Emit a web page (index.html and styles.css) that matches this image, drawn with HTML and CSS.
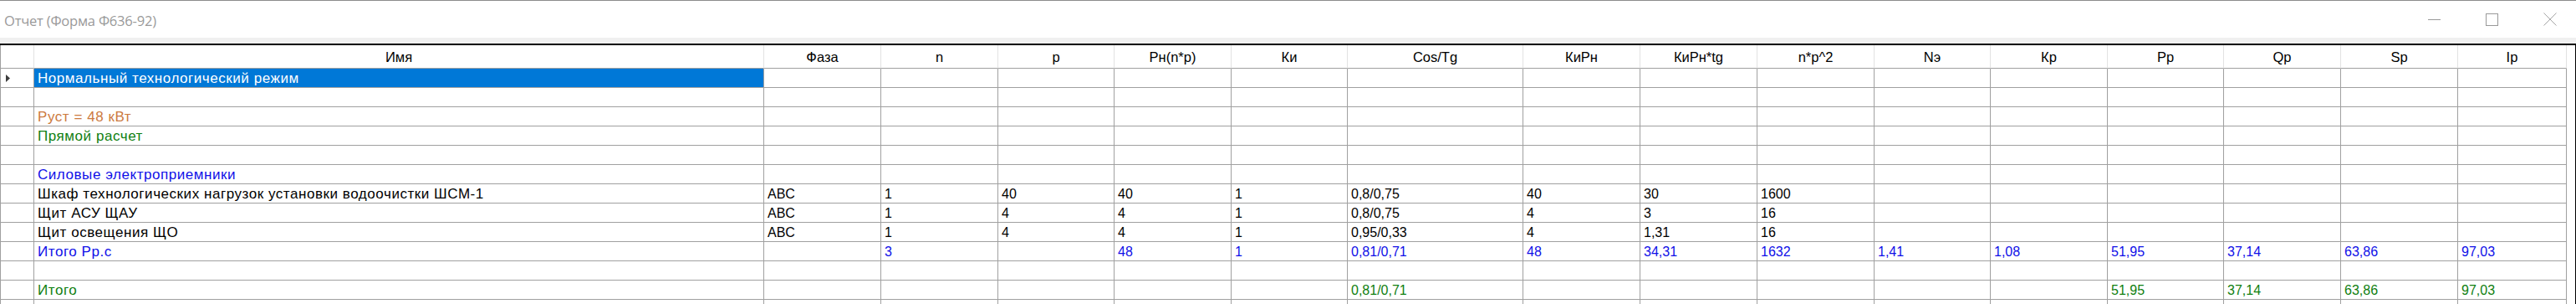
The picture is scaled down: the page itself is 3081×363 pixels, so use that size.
FILE: index.html
```html
<!DOCTYPE html>
<html lang="ru">
<head>
<meta charset="utf-8">
<title>Отчет (Форма Ф636-92)</title>
<link rel="stylesheet" href="styles.css">
</head>
<body>
<div class="titlebar">
  <span class="title">Отчет (Форма Ф636-92)</span>
  <div class="controls">
    <span class="ctl"><svg width="15" height="15" viewBox="0 0 15 15"><line x1="0" y1="7.5" x2="15" y2="7.5" stroke="#999" stroke-width="1"/></svg></span>
    <span class="ctl"><svg width="15" height="15" viewBox="0 0 15 15"><rect x="0.5" y="0.5" width="14" height="14" fill="none" stroke="#999" stroke-width="1"/></svg></span>
    <span class="ctl"><svg width="16" height="16" viewBox="0 0 16 16"><path d="M0.5 0.5 L15.5 15.5 M15.5 0.5 L0.5 15.5" stroke="#a6a6a6" stroke-width="1" fill="none"/></svg></span>
  </div>
</div>
<div class="band"></div>
<div class="grid">
  <div class="row head">
    <div class="h"></div><div class="h">Имя</div><div class="h">Фаза</div><div class="h">n</div><div class="h">p</div><div class="h">Рн(n*p)</div><div class="h">Ки</div><div class="h">Cos/Tg</div><div class="h">КиРн</div><div class="h">КиРн*tg</div><div class="h">n*p^2</div><div class="h">Nэ</div><div class="h">Кр</div><div class="h">Рр</div><div class="h">Qр</div><div class="h">Sр</div><div class="h">Iр</div>
  </div>
  <div class="row">
    <div class="c rh"><svg class="arrow" width="5" height="9" viewBox="0 0 5 9"><polygon points="0,0 5,4.5 0,9" fill="#3c3c3c"/></svg></div><div class="c t sel">Нормальный технологический режим</div><div class="c"></div><div class="c"></div><div class="c"></div><div class="c"></div><div class="c"></div><div class="c"></div><div class="c"></div><div class="c"></div><div class="c"></div><div class="c"></div><div class="c"></div><div class="c"></div><div class="c"></div><div class="c"></div><div class="c"></div>
  </div>
  <div class="row">
    <div class="c rh"></div><div class="c t"></div><div class="c"></div><div class="c"></div><div class="c"></div><div class="c"></div><div class="c"></div><div class="c"></div><div class="c"></div><div class="c"></div><div class="c"></div><div class="c"></div><div class="c"></div><div class="c"></div><div class="c"></div><div class="c"></div><div class="c"></div>
  </div>
  <div class="row orange">
    <div class="c rh"></div><div class="c t">Руст = 48 кВт</div><div class="c"></div><div class="c"></div><div class="c"></div><div class="c"></div><div class="c"></div><div class="c"></div><div class="c"></div><div class="c"></div><div class="c"></div><div class="c"></div><div class="c"></div><div class="c"></div><div class="c"></div><div class="c"></div><div class="c"></div>
  </div>
  <div class="row green">
    <div class="c rh"></div><div class="c t">Прямой расчет</div><div class="c"></div><div class="c"></div><div class="c"></div><div class="c"></div><div class="c"></div><div class="c"></div><div class="c"></div><div class="c"></div><div class="c"></div><div class="c"></div><div class="c"></div><div class="c"></div><div class="c"></div><div class="c"></div><div class="c"></div>
  </div>
  <div class="row">
    <div class="c rh"></div><div class="c t"></div><div class="c"></div><div class="c"></div><div class="c"></div><div class="c"></div><div class="c"></div><div class="c"></div><div class="c"></div><div class="c"></div><div class="c"></div><div class="c"></div><div class="c"></div><div class="c"></div><div class="c"></div><div class="c"></div><div class="c"></div>
  </div>
  <div class="row blue">
    <div class="c rh"></div><div class="c t">Силовые электроприемники</div><div class="c"></div><div class="c"></div><div class="c"></div><div class="c"></div><div class="c"></div><div class="c"></div><div class="c"></div><div class="c"></div><div class="c"></div><div class="c"></div><div class="c"></div><div class="c"></div><div class="c"></div><div class="c"></div><div class="c"></div>
  </div>
  <div class="row">
    <div class="c rh"></div><div class="c t">Шкаф технологических нагрузок установки водоочистки ШСМ-1</div><div class="c">ABC</div><div class="c">1</div><div class="c">40</div><div class="c">40</div><div class="c">1</div><div class="c">0,8/0,75</div><div class="c">40</div><div class="c">30</div><div class="c">1600</div><div class="c"></div><div class="c"></div><div class="c"></div><div class="c"></div><div class="c"></div><div class="c"></div>
  </div>
  <div class="row">
    <div class="c rh"></div><div class="c t">Щит АСУ ЩАУ</div><div class="c">ABC</div><div class="c">1</div><div class="c">4</div><div class="c">4</div><div class="c">1</div><div class="c">0,8/0,75</div><div class="c">4</div><div class="c">3</div><div class="c">16</div><div class="c"></div><div class="c"></div><div class="c"></div><div class="c"></div><div class="c"></div><div class="c"></div>
  </div>
  <div class="row">
    <div class="c rh"></div><div class="c t">Щит освещения ЩО</div><div class="c">ABC</div><div class="c">1</div><div class="c">4</div><div class="c">4</div><div class="c">1</div><div class="c">0,95/0,33</div><div class="c">4</div><div class="c">1,31</div><div class="c">16</div><div class="c"></div><div class="c"></div><div class="c"></div><div class="c"></div><div class="c"></div><div class="c"></div>
  </div>
  <div class="row blue">
    <div class="c rh"></div><div class="c t">Итого Рр.с</div><div class="c"></div><div class="c">3</div><div class="c"></div><div class="c">48</div><div class="c">1</div><div class="c">0,81/0,71</div><div class="c">48</div><div class="c">34,31</div><div class="c">1632</div><div class="c">1,41</div><div class="c">1,08</div><div class="c">51,95</div><div class="c">37,14</div><div class="c">63,86</div><div class="c">97,03</div>
  </div>
  <div class="row">
    <div class="c rh"></div><div class="c t"></div><div class="c"></div><div class="c"></div><div class="c"></div><div class="c"></div><div class="c"></div><div class="c"></div><div class="c"></div><div class="c"></div><div class="c"></div><div class="c"></div><div class="c"></div><div class="c"></div><div class="c"></div><div class="c"></div><div class="c"></div>
  </div>
  <div class="row green">
    <div class="c rh"></div><div class="c t">Итого</div><div class="c"></div><div class="c"></div><div class="c"></div><div class="c"></div><div class="c"></div><div class="c">0,81/0,71</div><div class="c"></div><div class="c"></div><div class="c"></div><div class="c"></div><div class="c"></div><div class="c">51,95</div><div class="c">37,14</div><div class="c">63,86</div><div class="c">97,03</div>
  </div>
  <div class="row">
    <div class="c rh"></div><div class="c t"></div><div class="c"></div><div class="c"></div><div class="c"></div><div class="c"></div><div class="c"></div><div class="c"></div><div class="c"></div><div class="c"></div><div class="c"></div><div class="c"></div><div class="c"></div><div class="c"></div><div class="c"></div><div class="c"></div><div class="c"></div>
  </div>
</div>
</body>
</html>
```

FILE: styles.css
```css
html, body {
  margin: 0;
  padding: 0;
}
body {
  width: 3081px;
  height: 363px;
  overflow: hidden;
  background: #ffffff;
  font-family: "Liberation Sans", Arial, sans-serif;
  color: #000;
}

/* Title bar */
.titlebar {
  height: 45px;
  box-sizing: border-box;
  border-top: 1px solid #8c8c8c;
  display: flex;
  align-items: stretch;
  justify-content: space-between;
  background: #ffffff;
}
.title {
  font-family: "Open Sans", "Noto Sans", sans-serif;
  font-size: 16.5px;
  color: #9a9a9a;
  padding-left: 5px;
  padding-top: 2px;
  display: flex;
  align-items: center;
  letter-spacing: -0.2px;
}
.controls {
  display: flex;
  margin-right: -3px;
}
.ctl {
  width: 69px;
  display: flex;
  align-items: center;
  justify-content: center;
}
.ctl svg {
  display: block;
}

.band {
  height: 7px;
  background: #f0f0f0;
}

/* Grid */
.grid {
  box-sizing: border-box;
  width: 3081px;
  border-top: 2px solid #000;
  border-right: 1px solid #000;
  background: #fff;
}
.row {
  display: grid;
  grid-template-columns: 41px 873px 140px 140px 139px 140px 139px 210px 140px 140px 140px 139px 140px 139px 140px 140px 130px;
}
.h {
  box-sizing: border-box;
  height: 28px;
  border-right: 1px solid #e2e2e2;
  border-bottom: 1px solid #a0a0a0;
  text-align: center;
  font-size: 16.5px;
  line-height: 25px;
  padding-top: 2px;
  white-space: nowrap;
  overflow: hidden;
}
.head .h:first-child {
  border-left: 1px solid #a0a0a0;
}
.c {
  box-sizing: border-box;
  height: 23px;
  border-right: 1px solid #a0a0a0;
  border-bottom: 1px solid #a0a0a0;
  padding: 2px 0 0 4px;
  font-size: 16px;
  line-height: 20px;
  white-space: nowrap;
  overflow: hidden;
}
.c.t {
  font-size: 17px;
  letter-spacing: 0.55px;
}
.c.rh {
  border-left: 1px solid #a0a0a0;
  padding: 0 0 0 6px;
  display: flex;
  align-items: center;
}
.arrow {
  display: block;
}
.sel {
  background: #0078d7;
  color: #ffffff;
}

.orange { color: #cc7a40; }
.green  { color: #108010; }
.blue   { color: #1010e8; }
```
